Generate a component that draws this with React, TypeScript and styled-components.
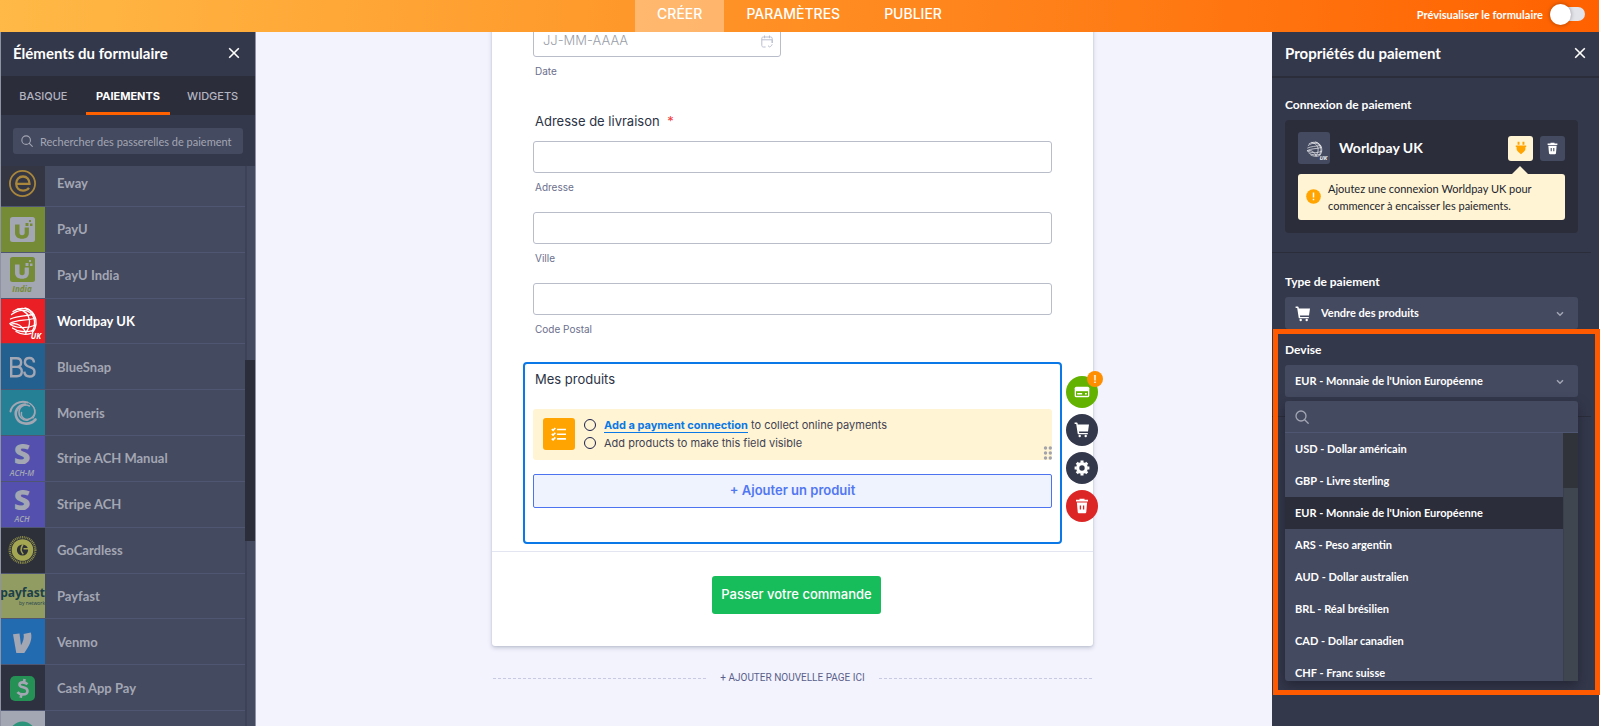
import React from "react";
import styled, { createGlobalStyle, css } from "styled-components";

const color = {
  panel: "#34384b",
  panelDark: "#2b2d3b",
  field: "#444a60",
  line: "#4e5672",
  muted: "#a3a6b3",
  canvas: "#f3f3fe",
  orange: "#ff6100",
  blue: "#0a78e6",
  indigo: "#4d73f0",
  cream: "#fff4d3",
  amber: "#ffa400",
  ink: "#2c3345",
};

const Global = createGlobalStyle`
  *, *::before, *::after { box-sizing: border-box; }
  body { margin: 0; background: #fff; font-family: Lato, "Liberation Sans", sans-serif; }
  button, input, select { font-family: inherit; margin: 0; }
  button { cursor: pointer; }
  h1, h2, h3, p, ul { margin: 0; padding: 0; font-weight: inherit; }
  ul { list-style: none; }
`;

const Shell = styled.div`
  display: flex;
  flex-direction: column;
  height: 100vh;
  padding-right: 2px;
  overflow: hidden;
`;

/* ---------- top bar ---------- */

const TopBar = styled.header`
  display: grid;
  grid-template-columns: 1fr auto 1fr;
  flex: none;
  height: 32px;
  background: linear-gradient(95deg, #ffb946 0%, #ffa031 30%, #ff6100 100%);
`;

const TopNav = styled.nav`
  grid-column: 2;
  display: flex;
`;

const TopLink = styled.a<{ $active?: boolean }>`
  padding: 4px 22px 8px;
  font: 500 14px/20px Inter, sans-serif;
  color: #fff;
  text-decoration: none;
  background: ${(p) => (p.$active ? "rgba(255, 255, 255, 0.32)" : "transparent")};
`;

const Preview = styled.label`
  display: flex;
  align-items: center;
  justify-self: end;
  height: 28px;
  gap: 7px;
  padding-right: 14px;
  font-size: 11px;
  font-weight: 700;
  color: #fff;
`;

const Switch = styled.input`
  appearance: none;
  display: flex;
  align-items: center;
  width: 35px;
  height: 14px;
  border-radius: 7px;
  background: #e3e3ea;
  &::before {
    content: "";
    width: 21px;
    height: 21px;
    flex: none;
    border-radius: 50%;
    background: #fff;
    box-shadow: 0 0 4px rgba(0, 0, 0, 0.35);
  }
`;

/* ---------- shared ---------- */

const Body = styled.div`
  display: flex;
  flex: 1;
  min-height: 0;
`;

const PanelHead = styled.div<{ $ruled?: boolean }>`
  display: flex;
  align-items: center;
  justify-content: space-between;
  flex: none;
  height: ${(p) => (p.$ruled ? 46 : 44)}px;
  padding: 0 ${(p) => (p.$ruled ? 13 : 15)}px 2px ${(p) => (p.$ruled ? 13 : 12)}px;
  border-bottom: ${(p) => (p.$ruled ? "2px" : "0")} solid ${color.panelDark};
`;

const PanelTitle = styled.h2`
  font-size: 15px;
  line-height: 20px;
  font-weight: 700;
  color: #fff;
`;

const IconButton = styled.button`
  display: flex;
  padding: 0;
  border: 0;
  background: none;
  color: #fff;
`;

/* ---------- left panel ---------- */

const Elements = styled.aside`
  display: flex;
  flex-direction: column;
  flex: none;
  width: 256px;
  border: solid #8f92a3;
  border-width: 0 1px;
  background: ${color.panel};
`;

const Tabs = styled.div`
  display: flex;
  flex: none;
  height: 39px;
  background: ${color.panelDark};
`;

const Tab = styled.button<{ $active?: boolean }>`
  flex: 1;
  padding: 4px 0 0;
  border: 0;
  border-bottom: 3px solid ${(p) => (p.$active ? color.orange : "transparent")};
  background: none;
  font: 500 11px/16px Inter, sans-serif;
  color: #b3b5c0;
  ${(p) => p.$active && css`color: #fff; font-weight: 700;`}
`;

const SearchRow = styled.label`
  display: flex;
  align-items: center;
  gap: 7px;
  flex: none;
  height: 26px;
  margin: 13px 12px 12px;
  padding: 0 7px 0 8px;
  border-radius: 3px;
  background: ${color.field};
  color: ${color.muted};
`;

const SearchInput = styled.input`
  flex: 1;
  min-width: 0;
  padding: 0;
  border: 0;
  outline: 0;
  background: none;
  color: #fff;
  font-size: 11px;
  &::placeholder { color: ${color.muted}; opacity: 1; }
`;

const Scroller = styled.div`
  display: flex;
  flex: 1;
  min-height: 0;
  overflow: hidden;
`;

const Gateways = styled.ul`
  display: grid;
  grid-template-rows: repeat(13, 1fr);
  flex: 1;
  height: 596px;
  margin-top: -5px;
`;

const Gateway = styled.li<{ $active?: boolean }>`
  display: flex;
  background: ${color.field};
  border-bottom: 1px solid ${color.line};
  color: ${(p) => (p.$active ? "#fff" : color.muted)};
`;

const GatewayButton = styled.button`
  display: flex;
  align-items: center;
  flex: 1;
  gap: 12px;
  padding: 0;
  border: 0;
  background: none;
  color: inherit;
  font-size: 13px;
  font-weight: 700;
  text-align: left;
`;

const Logo = styled.span<{ $bg: string }>`
  display: flex;
  align-items: center;
  align-self: stretch;
  width: 44px;
  background: ${(p) => p.$bg};
`;

const LeftTrack = styled.div`
  flex: none;
  width: 10px;
  border-left: 2px solid #3d4259;
  background: ${color.field};
`;

const LeftThumb = styled.div`
  height: 181px;
  margin: 194px 0 0 -2px;
  background: ${color.panelDark};
`;

/* ---------- form canvas ---------- */

const Canvas = styled.main`
  display: flex;
  flex-direction: column;
  align-items: center;
  flex: 1;
  min-width: 0;
  padding-left: 57px;
  overflow: hidden;
  background: ${color.canvas};
  font-family: Inter, "Liberation Sans", sans-serif;
`;

const FormCard = styled.form`
  display: flex;
  flex-direction: column;
  flex: none;
  width: 601px;
  max-width: 100%;
  margin-top: -32px;
  padding-top: 25px;
  border-radius: 3px;
  background: #fff;
  box-shadow: 0 2px 4px rgba(84, 95, 111, 0.3), 0 0 2px rgba(84, 95, 141, 0.2);
`;

const Field = styled.label<{ $gap?: number }>`
  display: flex;
  flex-direction: column;
  gap: 7px;
  margin: ${(p) => p.$gap ?? 0}px 41px 0;
  font-size: 10px;
  line-height: 14px;
  color: #6b6f8d;
  span { padding-left: 2px; }
`;

const TextInput = styled.input`
  width: 100%;
  height: 32px;
  padding: 0 9px 2px;
  border: 1px solid #b8bdc9;
  border-radius: 3px;
  background: #fff;
  font-size: 13px;
  font-weight: 300;
  &::placeholder { color: #9a9ea8; opacity: 1; }
`;

const DateBox = styled.div`
  position: relative;
  width: 248px;
  svg { position: absolute; right: 8px; top: 10px; }
`;

const GroupTitle = styled.h3`
  margin: 34px 43px 11px;
  font-size: 13px;
  line-height: 18px;
  color: ${color.ink};
`;

const Required = styled.span`
  margin-left: 4px;
  color: #f23a3c;
`;

const Selected = styled.section`
  position: relative;
  display: flex;
  flex-direction: column;
  margin: 26px 31px 7px;
  padding: 6px 8px 34px;
  border: 2px solid ${color.blue};
  border-radius: 4px;
`;

const SelectedTitle = styled.h3`
  padding-left: 2px;
  margin-bottom: 21px;
  font-size: 13px;
  line-height: 18px;
  color: ${color.ink};
`;

const Notice = styled.div`
  position: relative;
  display: flex;
  align-items: center;
  gap: 9px;
  height: 51px;
  padding: 0 0 2px 10px;
  border-radius: 3px;
  background: ${color.cream};
`;

const NoticeIcon = styled.span`
  display: flex;
  align-items: center;
  justify-content: center;
  width: 32px;
  height: 32px;
  border-radius: 3px;
  background: ${color.amber};
`;

const Steps = styled.ul`
  font-size: 11px;
  line-height: 18px;
  color: #3f4254;
`;

const Step = styled.li`
  display: flex;
  align-items: center;
  gap: 8px;
  &::before {
    content: "";
    width: 12px;
    height: 12px;
    border: 1px solid #1d2050;
    border-radius: 50%;
  }
  a {
    display: inline-block;
    line-height: 13px;
    border-bottom: 1px solid ${color.blue};
    color: ${color.blue};
    font-weight: 700;
    text-decoration: none;
  }
`;

const DragDots = styled.svg`
  position: absolute;
  right: 0;
  bottom: 0;
`;

const AddProduct = styled.button`
  height: 34px;
  margin-top: 14px;
  padding: 0 0 3px;
  border: 1px solid ${color.indigo};
  border-radius: 2px;
  background: #eff3fe;
  color: #5277f2;
  font-size: 13px;
  font-weight: 600;
`;

const Tools = styled.div`
  position: absolute;
  top: 12px;
  left: calc(100% + 6px);
  display: flex;
  flex-direction: column;
  gap: 6px;
`;

const Tool = styled.button<{ $bg: string }>`
  position: relative;
  display: flex;
  align-items: center;
  justify-content: center;
  width: 32px;
  height: 32px;
  padding: 0;
  border: 0;
  border-radius: 50%;
  background: ${(p) => p.$bg};
  color: #fff;
`;

const Badge = styled.span`
  position: absolute;
  top: -5px;
  right: -5px;
  width: 16px;
  height: 16px;
  border-radius: 50%;
  background: #ff8f00;
  font-size: 10px;
  line-height: 16px;
  font-weight: 600;
  text-align: center;
`;

const Submit = styled.div`
  display: flex;
  justify-content: center;
  padding: 24px 0 32px 8px;
  border-top: 1px solid #e3e5f0;
`;

const SubmitButton = styled.button`
  height: 38px;
  padding: 0 9px 2px;
  border: 0;
  border-radius: 3px;
  background: #18bd5b;
  color: #fff;
  font-size: 13px;
  font-weight: 500;
`;

const NewPage = styled.button`
  display: flex;
  align-items: center;
  flex: none;
  gap: 14px;
  width: 599px;
  max-width: 100%;
  margin-top: 25px;
  padding: 0;
  border: 0;
  background: none;
  font: 400 10px/14px Roboto, sans-serif;
  color: #5a5f8a;
  &::before, &::after {
    content: "";
    flex: 1;
    border-top: 1px dashed #c8cae4;
  }
`;

/* ---------- right panel ---------- */

const Properties = styled.aside`
  flex: none;
  width: 327px;
  background: ${color.panel};
`;

const Section = styled.section<{ $top: number }>`
  display: flex;
  flex-direction: column;
  gap: 13px;
  margin-right: 8px;
  padding: ${(p) => p.$top}px 13px 19px;
  border-bottom: 1px solid ${color.panelDark};
`;

const Prop = styled.div`
  position: relative;
  display: flex;
  flex-direction: column;
  gap: 7px;
`;

const PropLabel = styled.label`
  font-size: 12px;
  line-height: 16px;
  font-weight: 700;
  color: #fff;
`;

const Connection = styled.div`
  padding: 12px 13px 13px;
  border-radius: 4px;
  background: ${color.panelDark};
`;

const ConnectionRow = styled.div`
  display: flex;
  align-items: center;
  gap: 7px;
  h3 {
    flex: 1;
    padding: 0 0 2px 2px;
    font-size: 14px;
    font-weight: 700;
    color: #fff;
  }
`;

const ConnectionLogo = styled.span`
  display: flex;
  width: 32px;
  height: 32px;
  border-radius: 3px;
  background: ${color.field};
`;

const SquareButton = styled.button<{ $bg: string }>`
  display: flex;
  align-items: center;
  justify-content: center;
  width: 25px;
  height: 25px;
  padding: 0;
  border: 0;
  border-radius: 3px;
  background: ${(p) => p.$bg};
  color: #fff;
`;

const Tip = styled.div`
  position: relative;
  display: flex;
  align-items: center;
  gap: 7px;
  height: 46px;
  margin-top: 10px;
  padding: 0 9px 1px 8px;
  border-radius: 3px;
  background: ${color.cream};
  font-size: 11px;
  line-height: 17px;
  color: #22242f;
  &::before {
    content: "";
    position: absolute;
    top: -8px;
    right: 36px;
    border: solid transparent;
    border-width: 0 9px 9px;
    border-bottom-color: ${color.cream};
  }
`;

const SelectWrap = styled.div`
  position: relative;
  color: #fff;
  > svg { position: absolute; top: 9px; left: 10px; pointer-events: none; }
  > svg:last-child { top: 14px; left: auto; right: 14px; color: ${color.muted}; }
`;

const Select = styled.select<{ $icon?: boolean }>`
  appearance: none;
  display: block;
  width: 100%;
  height: 32px;
  padding: 0 30px 2px ${(p) => (p.$icon ? 36 : 10)}px;
  border: 0;
  border-radius: 3px;
  background: ${color.field};
  color: #fff;
  font-size: 11px;
  font-weight: 700;
`;

const Menu = styled.div`
  position: absolute;
  top: 59px;
  left: 0;
  right: 0;
  border-radius: 3px;
  background: ${color.field};
  box-shadow: 0 5px 12px rgba(20, 22, 34, 0.5);
`;

const MenuSearch = styled.label`
  display: flex;
  align-items: center;
  gap: 8px;
  height: 32px;
  padding: 0 10px;
  border-bottom: 1px solid ${color.line};
  color: ${color.muted};
`;

const MenuBody = styled.div`
  display: flex;
  height: 248px;
  overflow: hidden;
`;

const Options = styled.ul`
  flex: 1;
`;

const Option = styled.li`
  height: 32px;
  padding-left: 10px;
  font-size: 11px;
  line-height: 32px;
  font-weight: 700;
  color: #fff;
  &[aria-selected="true"] { background: ${color.panelDark}; }
`;

const MenuTrack = styled.div`
  width: 15px;
  border-left: 1px solid #3a404b;
  background: #3f4650;
`;

const MenuThumb = styled.div`
  height: 55px;
  margin-left: -1px;
  background: #303339;
`;

const Highlight = styled.div`
  position: absolute;
  top: -13px;
  left: -12px;
  right: -22px;
  height: 366px;
  border: 5px solid #ff5a00;
  pointer-events: none;
`;

/* ---------- icons ---------- */

const Close = () => (
  <svg width="12" height="12" viewBox="0 0 12 12" fill="none" stroke="currentColor" strokeWidth="1.6">
    <path d="M1.2 1.2l9.6 9.6M10.8 1.2l-9.6 9.6" />
  </svg>
);

const Magnifier = ({ size = 12 }: { size?: number }) => (
  <svg width={size} height={size} viewBox="0 0 14 14" fill="none" stroke="currentColor" strokeWidth="1.3" strokeLinecap="round">
    <circle cx="6" cy="6" r="5" />
    <path d="M9.7 9.7l3.5 3.5" />
  </svg>
);

const Chevron = () => (
  <svg width="8" height="6" viewBox="0 0 8 6" fill="none" stroke="currentColor" strokeWidth="1.5">
    <path d="M1 1.2l3 3 3-3" />
  </svg>
);

const Cart = () => (
  <svg width="16" height="16" viewBox="0 0 16 16" fill="currentColor">
    <path d="M.6.6h2.2c.4 0 .7.3.8.7L3.8 2.4H15l-1 7H4.9l.3 1.6h8.6v1.3H4.5a.8.8 0 0 1-.8-.6L2.2 2H.6z" />
    <circle cx="5.7" cy="14" r="1.2" />
    <circle cx="11.7" cy="14" r="1.2" />
  </svg>
);

const Trash = ({ size = 16, hole }: { size?: number; hole: string }) => (
  <svg width={size} height={size} viewBox="0 0 16 16" fill="currentColor">
    <path d="M5.5.8h5v1H14v1.8H2V1.8h3.5z" />
    <path d="M2.9 4.5h10.2l-.8 9.4c-.1.8-.6 1.3-1.4 1.3H5.1c-.8 0-1.3-.5-1.4-1.3z" />
    <path d="M6.4 7.4v4M9.6 7.4v4" stroke={hole} strokeWidth="1.3" />
  </svg>
);

const Gear = () => (
  <svg width="16" height="16" viewBox="0 0 16 16">
    <g fill="none" stroke="#fff">
      <circle cx="8" cy="8" r="4.3" strokeWidth="3.2" />
      <path
        strokeWidth="3"
        d="M8 .6v2M8 13.4v2M.6 8h2M13.4 8h2M2.8 2.8l1.4 1.4M11.8 11.8l1.4 1.4M2.8 13.2l1.4-1.4M11.8 4.2l1.4-1.4"
      />
    </g>
  </svg>
);

const Card = () => (
  <svg width="16" height="12" viewBox="0 0 16 12">
    <rect x=".7" y=".7" width="14.6" height="10.6" rx="1.6" fill="#fff" />
    <path d="M2 5.2h12v4.6H2z" fill="#64b200" />
    <path d="M3.2 7.8h5M11 7.8h1.8" stroke="#fff" strokeWidth="1.6" />
  </svg>
);

const Checklist = () => (
  <svg width="16" height="14" viewBox="0 0 16 14" fill="none" stroke="#fff" strokeWidth="1.6">
    <path d="M6 2.5h9M6 7.2h9M6 11.9h9" />
    <path d="M.8 2.2l1.3 1.2L4.3 1M.8 6.9l1.3 1.2 2.2-2.4M.8 11.6l1.3 1.2 2.2-2.4" />
  </svg>
);

const Calendar = () => (
  <svg width="12" height="13" viewBox="0 0 12 13" fill="none" stroke="#b9bed0" strokeWidth="1">
    <path d="M.8 4.8h10.4V8M4.6 12H2.3C1.4 12 .8 11.4.8 10.5V3.4C.8 2.5 1.4 2 2.3 2h7.4c.9 0 1.5.5 1.5 1.4V8M3.5.5v2.700M8.500.5v2.700M7 10.700l1.500 1.200c1.200-.3 2.300-1.200 2.700-2.600" />
  </svg>
);

const Plug = () => (
  <svg width="12" height="14" viewBox="0 0 12 14" fill={color.amber}>
    <path d="M2.600.8h1.900v3H2.600zM7.500.8h1.900v3H7.500zM.8 4.600h10.400v1.500h-.8v1.900c0 2-2 3.200-4.400 5.200C3.600 11.200 1.600 10 1.600 8V6.100H.8z" />
  </svg>
);

const Alert = () => (
  <svg width="15" height="15" viewBox="0 0 15 15">
    <circle cx="7.500" cy="7.500" r="7.300" fill={color.amber} />
    <path d="M7.500 3.500v5M7.500 9.800v1.500" stroke="#fff" strokeWidth="1.500" />
  </svg>
);

const Dots = () => (
  <DragDots width="9" height="14" viewBox="0 0 9 14" fill="#a2a3ac">
    {[2, 7, 12].map((y) => (
      <g key={y}>
        <circle cx="2.500" cy={y} r="1.700" />
        <circle cx="7.300" cy={y} r="1.700" />
      </g>
    ))}
  </DragDots>
);

const Globe = () => (
  <g fill="none" stroke="#fff" strokeWidth="1.300" strokeLinecap="round">
    <path d="M12 12.500C19 7.500 29 9 33 15.500c3.500 6 2.500 13.500-1.500 18" />
    <path d="M10.500 15.500c7-5.500 15-5 18.500-2 5.500 5 6 13 2 19" />
    <path d="M9.500 20c6-3 15-3 23-4.500M8.800 24.500c7-4 17-2.500 25.500-5.500" />
    <path d="M9.500 25.500c5 3.500 16 4.500 25 .5M11.500 29c5 4 14 4.500 20.500 2.500M15 32.500c4 2.500 10 3.500 15 1.800" />
    <path d="M17 10c7 1.500 11 6 11.500 12 .2 5-1.500 9-4 12M24 9c5 1 9 6 9.500 9" />
    <path d="M9.500 25.500c3-1.500 6-1.200 9 .8 3 2.200 5.500 5 6.500 8" />
  </g>
);

const LogoText = ({ x, y, size, fill = color.muted, weight = 700, italic, children }: {
  x: number; y: number; size: number; fill?: string; weight?: number; italic?: boolean; children: string;
}) => (
  <text
    x={x}
    y={y}
    fontSize={size}
    fill={fill}
    fontWeight={weight}
    fontStyle={italic ? "italic" : "normal"}
    textAnchor="middle"
    fontFamily="Open Sans, sans-serif"
  >
    {children}
  </text>
);

const PayU = ({ y, box, mark }: { y: number; box: string; mark: string }) => (
  <g>
    <rect x="9" y={y} width="25" height="25" rx="2.500" fill={box} />
    <g transform={`translate(9 ${y})`} fill={mark}>
      <path d="M5 7.500h4.500v8c0 1.800.8 2.700 2.600 2.700s2.600-.9 2.600-2.700v-5h4.200v5.300c0 3.900-2.500 6-6.800 6S5 19.700 5 15.800z" />
      <path d="M15.500 6h3v3h-3zM19 3h2v2h-2zM20 6.500h2.500V9H20z" />
    </g>
  </g>
);

type Item = { name: string; bg: string; active?: boolean; art: React.ReactNode };

const gateways: Item[] = [
  {
    name: "Eway",
    bg: "#343743",
    art: (
      <g fill="none" stroke="#a9863b">
        <circle cx="21.500" cy="22.500" r="12.600" strokeWidth="1.800" />
        <path d="M15.500 22.800h13c0-4.600-2.600-7.300-6.500-7.300-4 0-6.800 3-6.800 7.100 0 4.200 2.800 7 6.900 7 2.500 0 4.500-.9 5.900-2.700" strokeWidth="2.300" />
      </g>
    ),
  },
  { name: "PayU", bg: "#768b36", art: <PayU y={10} box={color.muted} mark="#768b36" /> },
  {
    name: "PayU India",
    bg: color.muted,
    art: (
      <g>
        <PayU y={4} box="#768b36" mark={color.muted} />
        <LogoText x={21} y={39} size={8} italic fill="#768b36">India</LogoText>
      </g>
    ),
  },
  {
    name: "Worldpay UK",
    bg: "#ea1f26",
    active: true,
    art: (
      <g>
        <Globe />
        <LogoText x={35} y={40} size={8} italic fill="#fff">UK</LogoText>
      </g>
    ),
  },
  {
    name: "BlueSnap",
    bg: "#23608f",
    art: (
      <g fill="none" stroke={color.muted} strokeWidth="2.400">
        <path d="M10.200 13.200h5.300c3 0 4.600 1.600 4.600 4.200 0 2.800-1.700 4.500-4.600 4.500h-5.300zM10.200 21.900h5.800c3.200 0 4.800 1.800 4.800 4.700s-1.700 4.700-4.900 4.700h-5.700z" />
        <path d="M33 17.500c-.2-2.900-1.900-4.500-4.600-4.500-2.800 0-4.500 1.600-4.500 4.200 0 2.700 1.700 3.800 4.600 4.700 3.200.9 5 2.200 5 5 0 2.800-1.900 4.600-5 4.600s-5-1.700-5.200-4.800" />
      </g>
    ),
  },
  {
    name: "Moneris",
    bg: "#258096",
    art: (
      <g fill="none" stroke={color.muted} strokeLinecap="round">
        <path d="M9.500 20.500c1.500-7 9-11.500 17-9" strokeWidth="2" />
        <path d="M29 12.500c6 4 6.500 11.500.5 15-5 2.500-10-1-9-6" strokeWidth="1.500" />
        <path d="M27 11.500c7 2.500 9.500 10 5 16" strokeWidth="1" />
        <path d="M28.500 15c-5-2.500-10.500.5-10.500 6.500 0 5 4.500 8.500 9 7.500" strokeWidth="1.600" />
        <path d="M24 13.500c-7 .5-11 7-8.500 13 3 7 13 8.500 19 2" strokeWidth="2.600" />
      </g>
    ),
  },
  {
    name: "Stripe ACH Manual",
    bg: "#5451ae",
    art: (
      <g>
        <LogoText x={21} y={28} size={29} weight={800}>S</LogoText>
        <LogoText x={21} y={40} size={8} italic weight={600}>ACH-M</LogoText>
      </g>
    ),
  },
  {
    name: "Stripe ACH",
    bg: "#5451ae",
    art: (
      <g>
        <LogoText x={21} y={28} size={29} weight={800}>S</LogoText>
        <LogoText x={21} y={40} size={8} italic weight={600}>ACH</LogoText>
      </g>
    ),
  },
  {
    name: "GoCardless",
    bg: "#2d3039",
    art: (
      <g>
        <circle cx="21.500" cy="22" r="12.800" fill="none" stroke="#8c8d49" strokeWidth="2.400" strokeDasharray="1 .8" />
        <circle cx="21.500" cy="22" r="10.800" fill="#a5a651" />
        <circle cx="21.500" cy="22" r="5.600" fill="#2d3039" />
        <path d="M22 16.500c-2.200 3-2.200 7 .3 9.800M22.500 20.800h5.500" fill="none" stroke="#a5a651" strokeWidth="1.500" />
      </g>
    ),
  },
  {
    name: "Payfast",
    bg: "#919c63",
    art: (
      <g>
        <LogoText x={21.500} y={23} size={12} fill="#1c3f49">payfast</LogoText>
        <LogoText x={31} y={31} size={5} weight={400} fill="#1c3f49">by network</LogoText>
      </g>
    ),
  },
  {
    name: "Venmo",
    bg: "#236bb0",
    art: <path d="M12 14.200l6.500-.7 1.500 11.800c2.200-3.600 3.400-7.800 2.600-11.300l7.200-1.400c2.200 6.700-1.900 14.200-6.500 20.400h-8z" fill={color.muted} />,
  },
  {
    name: "Cash App Pay",
    bg: "#2d3140",
    art: (
      <g>
        <rect x="9" y="10" width="25" height="25" rx="5" fill="#259155" />
        <path
          d="M26.500 18.300c-1.300-1.200-3-1.900-4.800-1.900-2 0-3.200.8-3.200 2.300 0 3.700 8 1.500 8 6.200 0 2.200-2 3.500-4.600 3.500-2.200 0-4.200-.9-5.500-2.300M23.600 13l-.7 3.300M20.400 28.500l-.7 3.300"
          fill="none"
          stroke={color.muted}
          strokeWidth="2.600"
        />
      </g>
    ),
  },
  { name: "Afterpay", bg: color.muted, art: <circle cx="21.500" cy="22.500" r="13" fill="#2b9379" /> },
];

const currencies = [
  "USD - Dollar américain",
  "GBP - Livre sterling",
  "EUR - Monnaie de l'Union Européenne",
  "ARS - Peso argentin",
  "AUD - Dollar australien",
  "BRL - Réal brésilien",
  "CAD - Dollar canadien",
  "CHF - Franc suisse",
];

/* ---------- page ---------- */

function ElementsPanel() {
  return (
    <Elements>
      <PanelHead>
        <PanelTitle>Éléments du formulaire</PanelTitle>
        <IconButton aria-label="Fermer"><Close /></IconButton>
      </PanelHead>
      <Tabs role="tablist">
        <Tab role="tab">BASIQUE</Tab>
        <Tab role="tab" aria-selected $active>PAIEMENTS</Tab>
        <Tab role="tab">WIDGETS</Tab>
      </Tabs>
      <SearchRow>
        <Magnifier />
        <SearchInput type="text" placeholder="Rechercher des passerelles de paiement" />
      </SearchRow>
      <Scroller>
        <Gateways>
          {gateways.map((g) => (
            <Gateway key={g.name} $active={g.active}>
              <GatewayButton>
                <Logo $bg={g.bg}>
                  <svg width="44" height="44" viewBox="0 0 44 44" aria-hidden>{g.art}</svg>
                </Logo>
                {g.name}
              </GatewayButton>
            </Gateway>
          ))}
        </Gateways>
        <LeftTrack><LeftThumb /></LeftTrack>
      </Scroller>
    </Elements>
  );
}

function FormCanvas() {
  return (
    <Canvas>
      <FormCard onSubmit={(e) => e.preventDefault()}>
        <Field>
          <DateBox>
            <TextInput type="text" placeholder="JJ-MM-AAAA" />
            <Calendar />
          </DateBox>
          <span>Date</span>
        </Field>
        <GroupTitle>Adresse de livraison <Required>*</Required></GroupTitle>
        <Field><TextInput type="text" /><span>Adresse</span></Field>
        <Field $gap={18}><TextInput type="text" /><span>Ville</span></Field>
        <Field $gap={18}><TextInput type="text" /><span>Code Postal</span></Field>
        <Selected>
          <SelectedTitle>Mes produits</SelectedTitle>
          <Notice>
            <NoticeIcon><Checklist /></NoticeIcon>
            <Steps>
              <Step><span><a href="#connexion">Add a payment connection</a> to collect online payments</span></Step>
              <Step><span>Add products to make this field visible</span></Step>
            </Steps>
            <Dots />
          </Notice>
          <AddProduct type="button">+ Ajouter un produit</AddProduct>
          <Tools>
            <Tool type="button" $bg="#64b200" aria-label="Connexion"><Card /><Badge>!</Badge></Tool>
            <Tool type="button" $bg={color.panel} aria-label="Produits"><Cart /></Tool>
            <Tool type="button" $bg={color.panel} aria-label="Réglages"><Gear /></Tool>
            <Tool type="button" $bg="#dc2626" aria-label="Supprimer"><Trash hole="#dc2626" /></Tool>
          </Tools>
        </Selected>
        <Submit><SubmitButton>Passer votre commande</SubmitButton></Submit>
      </FormCard>
      <NewPage>+ AJOUTER NOUVELLE PAGE ICI</NewPage>
    </Canvas>
  );
}

function PropertiesPanel() {
  return (
    <Properties>
      <PanelHead $ruled>
        <PanelTitle>Propriétés du paiement</PanelTitle>
        <IconButton aria-label="Fermer"><Close /></IconButton>
      </PanelHead>
      <Section $top={19}>
        <Prop>
          <PropLabel as="h3">Connexion de paiement</PropLabel>
          <Connection>
            <ConnectionRow>
              <ConnectionLogo>
                <svg width="32" height="32" viewBox="-8 -9 58 58" opacity=".9">
                  <Globe />
                  <LogoText x={38} y={42} size={11} italic fill="#fff">UK</LogoText>
                </svg>
              </ConnectionLogo>
              <h3>Worldpay UK</h3>
              <SquareButton $bg={color.cream} aria-label="Connecter"><Plug /></SquareButton>
              <SquareButton $bg={color.field} aria-label="Supprimer"><Trash size={13} hole={color.field} /></SquareButton>
            </ConnectionRow>
            <Tip>
              <Alert />
              <p>Ajoutez une connexion Worldpay UK pour<br />commencer à encaisser les paiements.</p>
            </Tip>
          </Connection>
        </Prop>
      </Section>
      <Section $top={21}>
        <Prop>
          <PropLabel htmlFor="type">Type de paiement</PropLabel>
          <SelectWrap>
            <Select id="type" $icon><option>Vendre des produits</option></Select>
            <Cart />
            <Chevron />
          </SelectWrap>
        </Prop>
        <Prop>
          <PropLabel htmlFor="devise">Devise</PropLabel>
          <SelectWrap>
            <Select id="devise" defaultValue={currencies[2]}>
              {currencies.map((c) => <option key={c}>{c}</option>)}
            </Select>
            <Chevron />
          </SelectWrap>
          <Menu>
            <MenuSearch>
              <Magnifier size={14} />
              <SearchInput type="text" aria-label="Rechercher une devise" />
            </MenuSearch>
            <MenuBody>
              <Options role="listbox" aria-label="Devise">
                {currencies.map((c, i) => (
                  <Option key={c} role="option" aria-selected={i === 2}>{c}</Option>
                ))}
              </Options>
              <MenuTrack><MenuThumb /></MenuTrack>
            </MenuBody>
          </Menu>
          <Highlight />
        </Prop>
      </Section>
    </Properties>
  );
}

export default function App() {
  return (
    <Shell>
      <Global />
      <TopBar>
        <TopNav>
          <TopLink href="#creer" $active>CRÉER</TopLink>
          <TopLink href="#parametres">PARAMÈTRES</TopLink>
          <TopLink href="#publier">PUBLIER</TopLink>
        </TopNav>
        <Preview>
          Prévisualiser le formulaire
          <Switch type="checkbox" role="switch" />
        </Preview>
      </TopBar>
      <Body>
        <ElementsPanel />
        <FormCanvas />
        <PropertiesPanel />
      </Body>
    </Shell>
  );
}
